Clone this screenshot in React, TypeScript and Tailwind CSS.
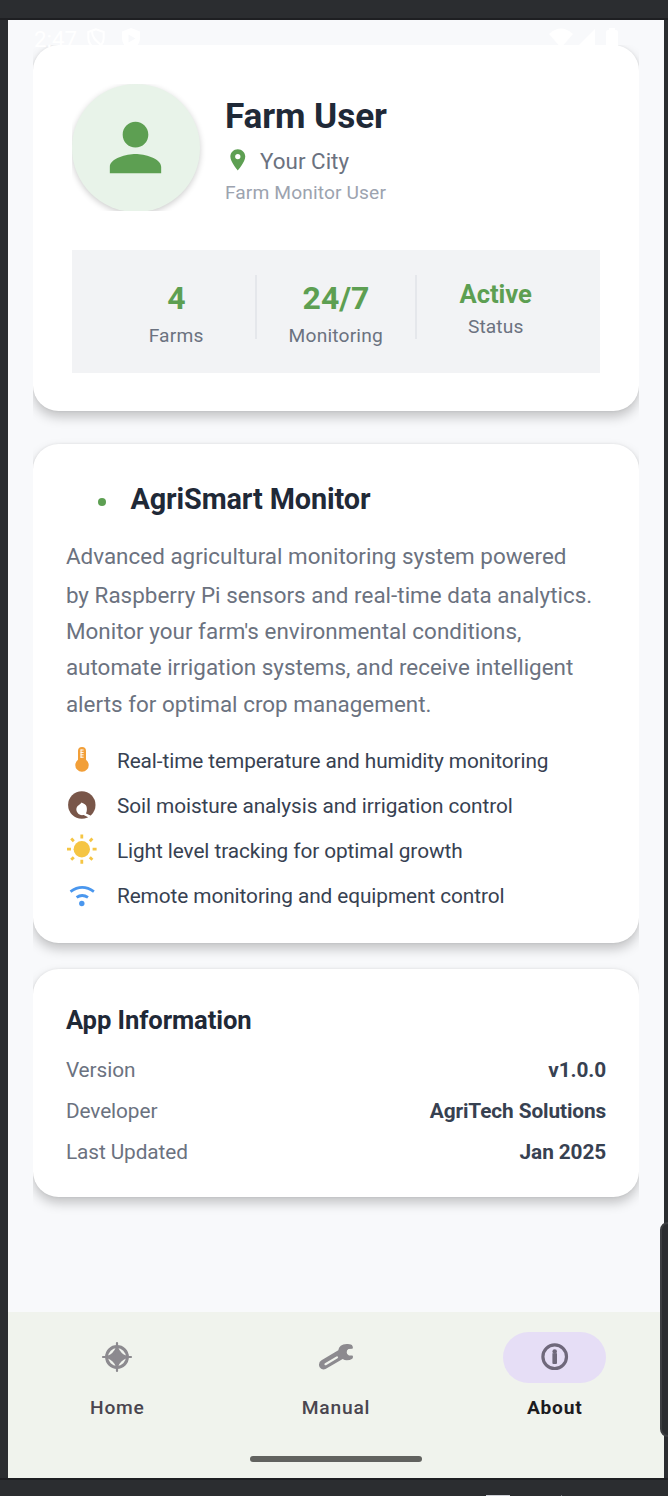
import React from "react";

const features = [
  { icon: "temp", label: "Real-time temperature and humidity monitoring" },
  { icon: "soil", label: "Soil moisture analysis and irrigation control" },
  { icon: "sun", label: "Light level tracking for optimal growth" },
  { icon: "wifi", label: "Remote monitoring and equipment control" },
];

const info = [
  ["Version", "v1.0.0"],
  ["Developer", "AgriTech Solutions"],
  ["Last Updated", "Jan 2025"],
];

function FeatureIcon({ name }: { name: string }) {
  return (
    <svg className="h-8 w-8 shrink-0" viewBox="0 0 32 32" fill="none">
      {name === "temp" && (
        <>
          <path d="M12 7a4 4 0 0 1 8 0v8.7a6.7 6.7 0 1 1-8 0z" fill="#f29f38" />
          <path d="M14.600 6h3M14.600 8.400h3M14.600 10.800h3M14.600 13.200h3M15 5.500v8.300" stroke="#fff" strokeWidth="1" />
        </>
      )}
      {name === "soil" && (
        <>
          <circle cx="15.8" cy="16" r="13.7" fill="#795649" />
          <path d="M15.600 13.500c.8 1 3 .8 4.300 2.800 1.200 1.700 1.500 5.500.1 8.100l4.400 2-1.300 2.400-5.400-2.700c-2.700.5-4.700-.300-6-2-1.600-2-1.600-4.200-1-5.600.8-2.500 3.700-2.800 4.900-5z" fill="#fff" />
        </>
      )}
      {name === "sun" && (
        <>
          <circle cx="15.8" cy="15.2" r="8.2" fill="#f5c543" />
          <path d="M15.800.6v4M15.800 25.800v4M1 15.200h4M26.600 15.200h4M5.200 4.600l2.600 2.600M26.400 4.600l-2.600 2.600M5.200 25.800l2.600-2.600M26.400 25.800l-2.600-2.600" stroke="#f5c543" strokeWidth="2.8" />
        </>
      )}
      {name === "wifi" && (
        <>
          <path d="M4.500 12.600q11.700-8.400 23.400 0M10.600 18.400q5.500-3.900 11.400 0" stroke="#4a97ee" strokeWidth="2.8" />
          <circle cx="15.8" cy="24.5" r="2.7" fill="#4a97ee" />
        </>
      )}
    </svg>
  );
}

function StatusBar() {
  return (
    <div className="absolute left-[26px] top-[4px] flex h-8 w-[604px] items-start justify-between text-white">
      <div className="flex">
        <span className="w-[53px] text-[22.4px] leading-[31px]">2:47</span>
        <svg className="mt-[4px] h-[22px] w-[18px]" viewBox="0 0 18 22" fill="none" stroke="#fff" strokeWidth="2">
          <path d="M9 1.3 1.3 4v6c0 4.600 3 8.300 7.700 10.500 4.700-2.200 7.700-5.900 7.700-10.500V4zM5 3c0 6 3 9 9 14" />
        </svg>
        <svg className="ml-[17px] mt-[4px] h-[22px] w-[18px]" viewBox="0 0 18 22">
          <path fillRule="evenodd" d="M9 0 0 3.500v6.500c0 5.500 4 10 9 12 5-2 9-6.500 9-12V3.500zM6.500 6.500v8l7-4z" fill="#fff" />
        </svg>
      </div>
      <svg className="mr-[17px] mt-[4px] h-[24px] w-[72px]" viewBox="0 0 72 24" fill="#fff">
        <path d="M0 6q12-11 24 0L12 20zM28 19 46 1v18zM57 4q0-2 2-2h1V0h6v2h1q2 0 2 2v19H57z" />
      </svg>
    </div>
  );
}

function Stat({ value, label, small }: { value: string; label: string; small?: boolean }) {
  return (
    <div className="flex flex-1 flex-col items-center">
      <span
        className={
          small
            ? "mt-[4px] text-[25.6px] font-bold leading-[30px] tracking-[-0.05px] text-[#5d9f52]"
            : "mt-[4px] text-[32px] font-bold leading-[38px] text-[#5d9f52]"
        }
      >
        {value}
      </span>
      <span
        className={
          small
            ? "mt-[7px] text-[19.2px] leading-[22px] tracking-[0.1px] text-[#6b7280]"
            : "mr-[0.500px] mt-[8px] text-[19.2px] leading-[22px] tracking-[0.180px] text-[#6b7280]"
        }
      >
        {label}
      </span>
    </div>
  );
}

const cardClass =
  "rounded-[25.6px] bg-white shadow-[0_6px_12px_rgba(0,0,0,0.22),0_0_3px_rgba(0,0,0,0.08)]";

export default function App() {
  return (
    <div className="relative flex h-[1496px] w-[668px] flex-col overflow-hidden bg-[#2b2d30] font-['Roboto',sans-serif]">
      <div className="h-5 shrink-0 border-b-2 border-[#1e1f22]" />
      <main className="relative ml-2 flex h-[1458px] w-[656px] shrink-0 flex-col bg-[#f8f9fb]">
        <div className="ml-[25.400px] mr-[25.400px] mt-[25px] h-[1267px] shrink-0 overflow-clip">
          <section className={`${cardClass} h-[366px] px-[38.500px] pt-[39px]`}>
            <div className="flex h-[127px] overflow-clip">
              <div className="flex h-[128px] w-[128px] shrink-0 items-center justify-center rounded-full bg-[#e8f3e9] pb-[2px] shadow-[0_2px_6px_rgba(0,0,0,0.2)]">
                <svg className="h-[77px] w-[77px]" viewBox="0 0 24 24" fill="#5d9f52">
                  <path d="M12 12c2.210 0 4-1.790 4-4s-1.790-4-4-4-4 1.790-4 4 1.790 4 4 4zm0 2c-2.670 0-8 1.340-8 4v2h16v-2c0-2.660-5.330-4-8-4z" />
                </svg>
              </div>
              <div className="ml-[25px] flex flex-col pt-[11px]">
                <h1 className="text-[35.2px] font-bold leading-[42px] tracking-[-0.1px] text-[#1f2937]">Farm User</h1>
                <div className="mt-[9px] flex h-[27px] items-center">
                  <svg className="h-[25.6px] w-[25.6px]" viewBox="0 0 24 24" fill="#5d9f52">
                    <path d="M12 2C8.130 2 5 5.130 5 9c0 5.250 7 13 7 13s7-7.750 7-13c0-3.870-3.130-7-7-7zm0 9.500a2.500 2.500 0 1 1 0-5 2.500 2.500 0 0 1 0 5z" />
                  </svg>
                  <span className="ml-[9.600px] mt-[2px] text-[22.4px] leading-[26px] text-[#6b7280]">Your City</span>
                </div>
                <span className="mt-[9px] text-[19.2px] leading-[22px] tracking-[0.120px] text-[#9ca3af]">Farm Monitor User</span>
              </div>
            </div>
            <div className="mt-[39px] flex h-[123px] bg-[#f2f3f5] px-[25.600px] pt-[25px]">
              <Stat value="4" label="Farms" />
              <div className="h-16 w-[2px] bg-[#e5e7eb]" />
              <Stat value="24/7" label="Monitoring" />
              <div className="h-16 w-[2px] bg-[#e5e7eb]" />
              <Stat value="Active" label="Status" small />
            </div>
          </section>

          <section className={`${cardClass} mt-[32.500px] h-[499.500px] pl-[32.500px] pr-8 pt-[38.500px]`}>
            <div className="flex h-[34px] items-center">
              <span className="ml-[32px] mt-[5px] h-2 w-2 rounded-full bg-[#5d9f52]" />
              <h2 className="ml-[24.500px] text-[28.8px] font-bold leading-[34px] tracking-[-0.090px] text-[#1f2937]">AgriSmart Monitor</h2>
            </div>
            <p className="mt-[22px] whitespace-nowrap text-[22.4px] leading-[36.4px] tracking-[0.030px] text-[#6b7280]">
              <span className="block h-[38.600px]">Advanced agricultural monitoring system powered</span>
              by Raspberry Pi sensors and real-time data analytics.
              <br />
              Monitor your farm's environmental conditions,
              <br />
              automate irrigation systems, and receive intelligent
              <br />
              alerts for optimal crop management.
            </p>
            <ul className="mt-[21.500px] flex flex-col gap-[13px]">
              {features.map((f) => (
                <li key={f.icon} className="flex h-8 items-center">
                  <FeatureIcon name={f.icon} />
                  <span className="ml-[19px] mt-[4px] whitespace-nowrap text-[20.8px] leading-[25px] tracking-[-0.080px] text-[#374151]">{f.label}</span>
                </li>
              ))}
            </ul>
          </section>

          <section className={`${cardClass} mt-[25.500px] h-[228px] px-[32.500px] pt-[36px]`}>
            <h3 className="text-[25.6px] font-bold leading-[30px] tracking-[-0.080px] text-[#1f2937]">App Information</h3>
            <dl className="mt-[15.500px]">
              {info.map(([k, v]) => (
                <div key={k} className="flex h-[40.800px] justify-between text-[20.8px] leading-[41px]">
                  <dt className="tracking-[-0.080px] text-[#6b7280]">{k}</dt>
                  <dd className="font-bold tracking-[-0.100px] text-[#374151]">{v}</dd>
                </div>
              ))}
            </dl>
          </section>
        </div>

        <nav className="flex h-[166px] shrink-0 flex-col items-center bg-[#f0f3ed]">
          <div className="flex w-full pt-[19.500px] text-[19.2px] font-medium leading-[26px] tracking-[0.8px] text-[#49454f]">
            <div className="flex flex-1 flex-col items-center">
              <div className="flex h-[51.200px] w-[102.400px] items-center justify-center">
                <svg className="h-[32px] w-[32px]" viewBox="0 0 32 32" fill="none">
                  <circle cx="16" cy="16" r="10.400" stroke="#8c8a8f" strokeWidth="3" />
                  <path d="M16 7Q18.500 13.500 25 16Q18.500 18.500 16 25Q13.500 18.500 7 16Q13.500 13.500 16 7" fill="#8c8a8f" stroke="#8c8a8f" strokeWidth="2.600" />
                  <path d="M16 2v28M2 16h28" stroke="#8c8a8f" strokeWidth="2.200" strokeLinecap="round" />
                </svg>
              </div>
              <span className="mt-[12px]">Home</span>
            </div>
            <div className="flex flex-1 flex-col items-center">
              <div className="flex h-[51.200px] w-[102.400px] items-center justify-center">
                <svg className="h-[30px] w-[38px]" viewBox="0 0 38 30" fill="none">
                  <path
                    d="M29.700 2C32.500 1.700 35 2.500 35.300 3.700C36.200 4.900 36 6.400 35.400 6.800L31.500 7Q29.700 8 29.700 10.300Q29.700 12.800 32 13.600L35.400 13.600C36.300 14.300 36.200 15.700 35.300 16.700Q33 18.300 29.700 18.300Q27.500 18.200 25.700 17L8.500 27C5 28.500 1.800 25.500 2 22.500Q2 19.800 4.500 18.200L21.300 8.300Q22 2.500 29.700 2z"
                    fill="#8c8a8f"
                  />
                  <path d="M8.500 22.200 20 15.400" stroke="#f0f3ed" strokeWidth="2.200" strokeLinecap="round" />
                </svg>
              </div>
              <span className="mt-[12px]">Manual</span>
            </div>
            <div className="flex flex-1 flex-col items-center">
              <div className="flex h-[51.200px] w-[102.400px] items-center justify-center rounded-full bg-[#e6def6]">
                <svg className="h-[32px] w-[32px]" viewBox="0 0 32 32" fill="none">
                  <circle cx="15.700" cy="15.700" r="11.800" stroke="#6f687b" strokeWidth="3.2" />
                  <path d="M13.400 12.300h4.600v9.700q0 1-1 1h-2.600q-1 0-1-1z" fill="#6f687b" />
                  <circle cx="15.700" cy="10.600" r="2.300" fill="#6f687b" />
                </svg>
              </div>
              <span className="mt-[12px] font-bold tracking-[0.750px] text-[#1c1b1f]">About</span>
            </div>
          </div>
          <div className="mt-[35px] h-[6px] w-[172px] rounded-full bg-[#61625f]" />
        </nav>
        <StatusBar />
      </main>
      <div className="flex flex-1 justify-start border-t-2 border-[#1e1f22] pt-[15px]">
        <div className="ml-[486px] h-px w-6 bg-[#ced0d6]" />
        <div className="ml-[51px] h-px w-px bg-[#6f737a]" />
      </div>
      <div className="absolute left-[660px] top-[1222px] h-[215px] w-5 rounded-lg border-2 border-[#3c3e41] bg-[#2b2d30]" />
    </div>
  );
}
